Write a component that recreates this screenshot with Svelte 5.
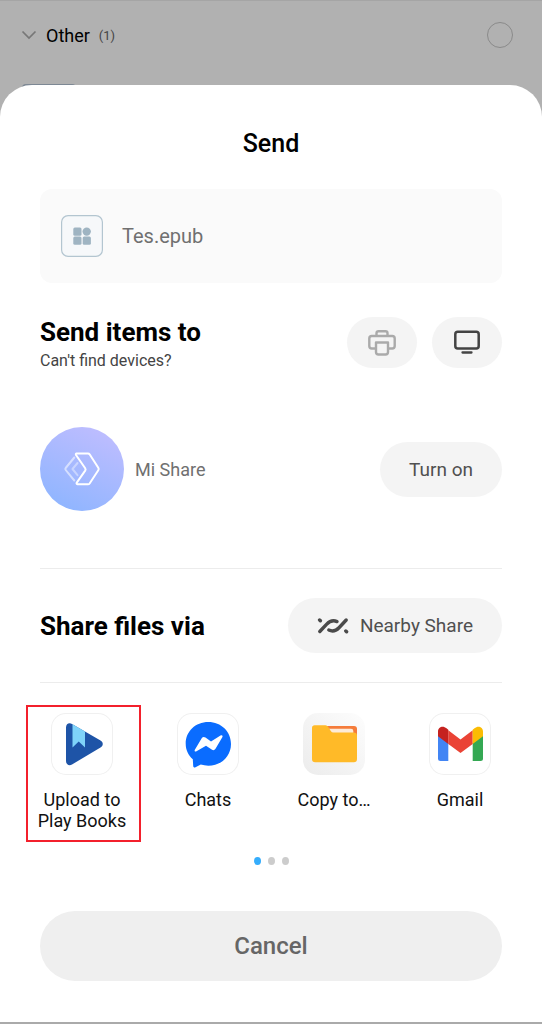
<script lang="ts">
  let page = $state(0);
  let selected = $state(false);

  const apps = [
    { id: "books", label: "Upload to Play Books", highlight: true },
    { id: "chats", label: "Chats" },
    { id: "copy", label: "Copy to…" },
    { id: "gmail", label: "Gmail" },
  ];
  const pages = [0, 1, 2];
</script>

<header class="group">
  <button class="toggle">
    <svg width="16" height="10" viewBox="0 0 16 10" aria-hidden="true">
      <path d="M1.500 1.500 8 8l6.500-6.500" fill="none" stroke="#777" stroke-width="1.700" />
    </svg>
    <span class="name">Other</span>
    <span class="count">(1)</span>
  </button>
  <input type="checkbox" aria-label="Select group" bind:checked={selected} />
</header>
<div class="thumb"></div>

<main class="sheet">
  <h1>Send</h1>

  <div class="file">
    <svg width="42" height="42" viewBox="0 0 42 42" aria-hidden="true">
      <rect x=".6" y=".6" width="40.800" height="40.800" rx="6.500" fill="#f6f8fa" stroke="#b3c5d0" stroke-width="1.200" />
      <g fill="#9fb4c2">
        <rect x="12.300" y="12.500" width="8.200" height="8.200" rx="1.500" />
        <circle cx="25.700" cy="16.600" r="4.200" />
        <rect x="12.300" y="21.500" width="8.200" height="8.200" rx="1.500" />
        <rect x="21.700" y="21.500" width="8.200" height="8.200" rx="1.500" />
      </g>
    </svg>
    <span>Tes.epub</span>
  </div>

  <section class="row devices">
    <div>
      <h2>Send items to</h2>
      <a class="help" href="#devices">Can't find devices?</a>
    </div>
    <div class="targets">
      <button class="pill icon" aria-label="Print">
        <svg width="30" height="28" viewBox="0 0 30 28" fill="none" stroke="#aaa" stroke-width="2.400" stroke-linejoin="round" aria-hidden="true">
          <path d="M9.500 7V4.200Q9.500 2.200 11.500 2.200h7Q20.500 2.200 20.500 4.200V7" />
          <path d="M8 19.500H4.800Q2.300 19.500 2.300 17V9.500Q2.300 7 4.800 7h20.400Q27.700 7 27.700 9.500V17q0 2.500-2.500 2.500H22" />
          <path d="M9 13.500h12V23q0 2.500-2.500 2.500h-7Q9 25.500 9 23z" />
        </svg>
      </button>
      <button class="pill icon" aria-label="Cast to screen">
        <svg width="28" height="26" viewBox="0 0 28 26" fill="none" stroke="#444" stroke-width="2.500" aria-hidden="true">
          <rect x="2.300" y="1.800" width="23.400" height="16.800" rx="2.500" />
          <path d="M9.500 22.500h9" stroke-linecap="round" stroke-width="2.300" />
        </svg>
      </button>
    </div>
  </section>

  <section class="row mi">
    <div class="service">
      <svg width="84" height="84" viewBox="0 0 84 84" aria-hidden="true">
        <defs>
          <linearGradient id="mi" x1=".25" y1="1" x2=".75" y2="0">
            <stop offset="0" stop-color="#8eb5ff" />
            <stop offset="1" stop-color="#bfbdff" />
          </linearGradient>
        </defs>
        <circle cx="42" cy="42" r="42" fill="url(#mi)" />
        <g transform="translate(24 25)" fill="none" stroke="#fff" stroke-width="2" stroke-linejoin="round" stroke-linecap="round">
          <path d="M12.500 1.500H24q1 0 1.600.8l8.700 13.500q.8 1.200 0 2.400l-8.700 13.300q-.6.800-1.600.800H13.500q-1.500-.3-.7-1.700l8.400-12q.8-1.200 0-2.400L12 3q-.6-1 .5-1.500z" />
          <path d="M10.300 5.500 1.700 16q-.8 1 0 2l8.600 10.500" opacity=".55" />
          <path d="M13.500 11 8.500 17l5 6.200" opacity=".4" />
        </g>
      </svg>
      <span>Mi Share</span>
    </div>
    <button class="pill">Turn on</button>
  </section>

  <section class="row via">
    <h2>Share files via</h2>
    <button class="pill">
      <svg width="32" height="18" viewBox="0 0 32 18" fill="none" stroke="#4a4a4a" stroke-width="3.400" stroke-linecap="round" aria-hidden="true">
        <path d="M2.800 14.500 9.500 7.400Q14.500 2.100 20 4.600" />
        <path d="M11.800 13q5.500 2.600 10.200-2.300L29.200 3" />
        <path d="M2.600 3 3.400 3.800M28.800 14l.8.800" />
      </svg>
      Nearby Share
    </button>
  </section>

  <ul class="apps">
    {#each apps as app (app.id)}
      <li class:highlight={app.highlight}>
        <button class="app">
          <span class="tile {app.id}">
            {#if app.id === "books"}
              <svg viewBox="0 0 62 62" aria-hidden="true">
                <path d="M15 14.500c0-3.500 3-5.200 6-3.500l28.500 16.500c3 1.700 3 5.300 0 7L21 51.500c-3 1.700-6 0-6-3.500z" fill="#1e54a7" />
                <path d="M21.500 11.300 34 18.500v16L27.700 28.500 21.500 34.500z" fill="#7fd3f9" />
              </svg>
            {:else if app.id === "chats"}
              <svg viewBox="0 0 62 62" aria-hidden="true">
                <path d="M31.300 9C18.500 9 8.700 18.400 8.700 30.600c0 6.600 2.600 11.800 7.100 15.700l.4 6.600c.1 1.300 1.100 1.800 2.300 1.300l5.300-2.600c2.300.7 4.800 1.100 7.500 1.100C44.100 52.700 54 43.300 54 30.900S44.100 9 31.300 9z" fill="#0a6cff" />
                <path d="M18 36.500 24.700 25.300q1.500-2.300 3.800-.8L34 28.500l9.500-6c1.500-.8 2.700.3 1.800 1.800L38.500 35.800q-1.500 2.300-3.800.8L29 32.700l-9.500 5.600c-1.500.8-2.500-.4-1.500-1.800z" fill="#fff" />
              </svg>
            {:else if app.id === "copy"}
              <svg viewBox="0 0 62 62" aria-hidden="true">
                <path d="M20 13h31q3 0 3 3v20H24z" fill="#f57c3b" />
                <path d="M24 15.800h24q2.300 0 2.300 2.300V25H26z" fill="#fdebd8" />
                <path d="M9 15q0-2.700 2.700-2.700h10.800q1.700 0 2.600 1.500l2.700 4.300q.9 1.500 2.600 1.500h20.300q3.300 0 3.300 3.200V46q0 3.200-3.200 3.200H12.200Q9 49.200 9 46z" fill="#ffba28" />
              </svg>
            {:else}
              <svg viewBox="0 0 62 62" aria-hidden="true">
                <path d="M9 22l10.300 8v18H11.500Q9 48 9 45.500z" fill="#4285f4" />
                <path d="M54 22l-10.300 8v18h7.800q2.500 0 2.500-2.500z" fill="#34a853" />
                <path d="M19.300 17.200 31.500 26.500 43.700 17.200V31L31.500 40 19.300 31z" fill="#ea4335" />
                <path d="M9 18.500c0-4.500 5-6.500 8.500-3.200l1.800 1.400V31L9 23.300z" fill="#c5221f" />
                <path d="M54 18.500c0-4.500-5-6.500-8.500-3.200l-1.800 1.400V31L54 23.300z" fill="#fbbc04" />
              </svg>
            {/if}
          </span>
          <span class="label">{app.label}</span>
        </button>
      </li>
    {/each}
  </ul>

  <div class="dots">
    {#each pages as p}
      <button class:active={p === page} aria-label="Page {p + 1}" onclick={() => (page = p)}></button>
    {/each}
  </div>

  <button class="cancel">Cancel</button>
</main>

<style>
  :global(body) { background: #b1b1b1; font-family: Roboto, "Liberation Sans", sans-serif; color: #000; }
  button { border: 0; padding: 0; background: none; font: inherit; color: inherit; cursor: pointer; }
  h1, h2 { margin: 0; }
  svg { display: block; flex: none; }

  .group { display: flex; align-items: center; justify-content: space-between;
    padding: 19px 29px 17px 21px; border-top: 1px solid #a5a5a5; height: 30px; }
  .toggle { display: flex; align-items: center; gap: 9px; }
  .name { font-size: 18px; color: #000; }
  .count { font-size: 13px; color: #444; }
  .group input { appearance: none; width: 26px; height: 26px; margin: 0;
    border: 1px solid #8a8a8a; border-radius: 50%; }
  .group input:checked { background: #35adfc; }
  .thumb { width: 54px; height: 12px; margin: 17px 0 0 22px; border-radius: 4px 4px 0 0;
    background: #7d8894; }

  .sheet { position: relative; margin-top: -11px; padding: 43px 40px 41px;
    background: #fff; border-radius: 32px 32px 0 0; border-bottom: 2px solid #aaa; }
  h1 { font-size: 25px; line-height: 32px; font-weight: 500; text-align: center; }
  h2 { font-size: 26px; line-height: 30px; font-weight: 700; }

  .file { display: flex; align-items: center; gap: 19px; margin-top: 29px; padding: 26px 21px;
    border-radius: 12px; background: #fafafa; color: #707070; font-size: 20px; }

  .row { display: flex; align-items: center; justify-content: space-between; }
  .devices { align-items: flex-start; margin-top: 34px; }
  .help { display: block; margin-top: 4px; font-size: 16px; line-height: 20px;
    color: #444; text-decoration: none; }
  .targets { display: flex; gap: 15px; }
  .pill { display: flex; align-items: center; justify-content: center; gap: 11px; height: 55px;
    padding: 0 29px; border-radius: 28px; background: #f4f4f4; color: #505050; font-size: 19px; }
  .icon { width: 70px; height: 51px; padding: 0; }

  .mi { margin-top: 56px; padding-bottom: 57px; border-bottom: 1px solid #ececec; }
  .service { display: flex; align-items: center; gap: 11px; color: #707070; font-size: 18px; }
  .via { padding: 29px 0; border-bottom: 1px solid #ececec; }

  .apps { display: grid; grid-template-columns: repeat(4, 1fr); list-style: none;
    margin: 30px -21px 0; padding: 0; }
  .apps li { position: relative; }
  .app { display: flex; flex-direction: column; align-items: center; gap: 14px; width: 100%; }
  .tile { box-sizing: border-box; width: 62px; height: 62px; border-radius: 15px;
    box-shadow: inset 0 0 0 1px #f0f0f0; }
  .tile.copy { background: linear-gradient(225deg, #fdfdfd, #ececec); box-shadow: none; }
  .label { width: 98px; font-size: 18px; line-height: 21px; color: #111; }
  .highlight::after { content: ""; position: absolute; inset: -8px 4px -11px 7px;
    border: 2px solid #f3202c; pointer-events: none; }

  .dots { display: flex; justify-content: center; gap: 7px; margin-top: 26px; }
  .dots button { width: 7px; height: 8px; border-radius: 50%; background: #ccc; }
  .dots .active { background: #35adfc; }

  .cancel { display: block; width: 100%; height: 70px; margin-top: 46px; border-radius: 35px;
    background: #efefef; color: #666; font-size: 24px; font-weight: 500; }
</style>
